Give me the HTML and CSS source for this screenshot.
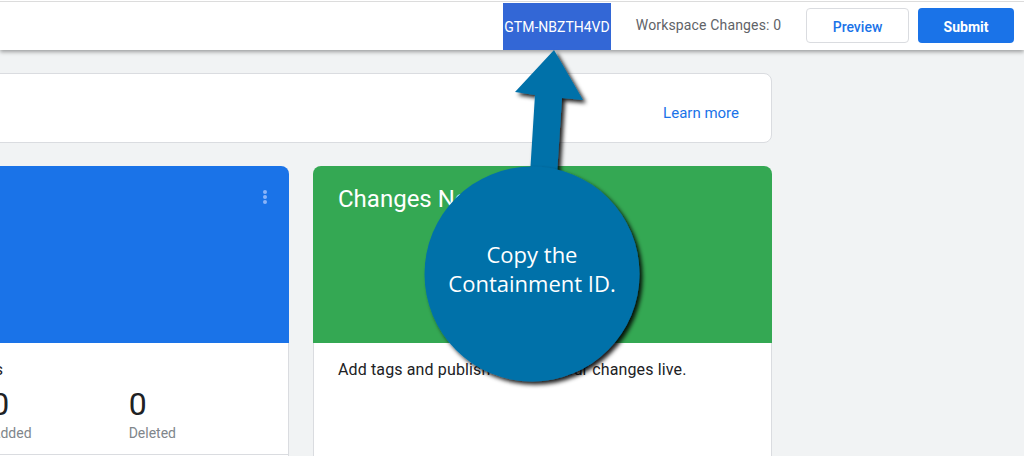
FILE: index.html
```html
<!DOCTYPE html>
<html lang="en">
<head>
<meta charset="utf-8">
<title>Workspace</title>
<link rel="stylesheet" href="styles.css">
</head>
<body>
<header class="topbar">
  <div class="container-id">GTM-NBZTH4VD</div>
  <div class="ws-changes">Workspace Changes: 0</div>
  <button class="btn btn-outline">Preview</button>
  <button class="btn btn-primary">Submit</button>
</header>
<main class="content">
  <section class="intro-card">
    <a class="learn-more">Learn more</a>
  </section>
  <div class="cards">
    <section class="card">
      <div class="card-head head-blue">
        <svg class="kebab" width="4" height="14" viewBox="0 0 4 14"><circle cx="2" cy="2" r="2"/><circle cx="2" cy="7" r="2"/><circle cx="2" cy="12" r="2"/></svg>
      </div>
      <div class="card-body">
        <div class="body-text">Workspace Changes</div>
        <div class="stats">
          <div class="stat"><div class="stat-num">0</div><div class="stat-label">Modified</div></div>
          <div class="stat"><div class="stat-num">0</div><div class="stat-label">Added</div></div>
          <div class="stat"><div class="stat-num">0</div><div class="stat-label">Deleted</div></div>
        </div>
        <div class="card-footer"></div>
      </div>
    </section>
    <section class="card">
      <div class="card-head head-green">
        <div class="head-title">Changes Not Published</div>
      </div>
      <div class="card-body">
        <div class="body-text">Add tags and publish to make your changes live.</div>
      </div>
    </section>
  </div>
</main>
<svg class="callout" width="1024" height="456" viewBox="0 0 1024 456">
  <defs>
    <filter id="sh" x="-20%" y="-20%" width="150%" height="150%">
      <feDropShadow dx="3" dy="3" stdDeviation="2" flood-color="#000" flood-opacity="0.9"/>
    </filter>
  </defs>
  <polygon filter="url(#sh)" fill="#0071a9" points="554,50 583,100 562,98 556,190 529,190 535,95 515,92"/>
  <circle filter="url(#sh)" fill="#0071a9" cx="532" cy="274" r="107.5"/>
  <text class="callout-text" x="532" y="263">Copy the</text>
  <text class="callout-text" x="532" y="292">Containment ID.</text>
</svg>
</body>
</html>
```
FILE: styles.css
```css
* { box-sizing: border-box; }
html, body { margin: 0; }
body {
  width: 1024px;
  height: 456px;
  overflow: hidden;
  position: relative;
  background: #f1f3f4;
  font-family: Roboto, "Liberation Sans", sans-serif;
  color: #202124;
}
.topbar {
  height: 50px;
  background: #fff;
  display: flex;
  align-items: flex-start;
  justify-content: flex-end;
  padding-right: 10px;
  position: relative;
  z-index: 1;
  box-shadow: inset 0 1px 0 #fff, inset 0 2px 0 #dcdcdc, 0 2px 4px rgba(0,0,0,.35);
}
.container-id {
  margin-top: 3px;
  height: 47px;
  width: 108px;
  background: #3367d6;
  color: #fff;
  font-size: 14px;
  display: flex;
  align-items: center;
  justify-content: center;
  margin-right: 24px;
  white-space: nowrap;
}
.ws-changes {
  align-self: center;
  width: 147px;
  text-align: center;
  font-size: 14px;
  letter-spacing: 0.15px;
  color: #5f6368;
  margin-right: 24px;
  white-space: nowrap;
}
.btn {
  margin-top: 8px;
  height: 35px;
  border-radius: 4px;
  font-family: Roboto, "Liberation Sans", sans-serif;
  font-size: 14px;
  font-weight: 500;
  display: flex;
  align-items: center;
  justify-content: center;
  padding: 2px 0 0;
  cursor: pointer;
}
.btn-outline {
  width: 103px;
  border: 1px solid #dadce0;
  background: #fff;
  color: #1a73e8;
  margin-right: 9px;
}
.btn-primary {
  width: 96px;
  border: none;
  background: #1a73e8;
  color: #fff;
  font-weight: 700;
}
.content {
  margin-left: -170px;
  width: 942px;
  padding-top: 23px;
}
.intro-card {
  height: 70px;
  background: #fff;
  border: 1px solid #dadce0;
  border-radius: 8px;
  display: flex;
  align-items: center;
  justify-content: flex-end;
  padding: 10px 32px 0;
}
.learn-more {
  color: #1a73e8;
  font-size: 15px;
  font-weight: 400;
}
.cards {
  display: grid;
  grid-template-columns: 459px 459px;
  gap: 24px;
  margin-top: 23px;
}
.card {
  height: 330px;
  border-radius: 8px;
  overflow: hidden;
  display: flex;
  flex-direction: column;
}
.card-head {
  height: 177px;
  display: flex;
  justify-content: space-between;
  align-items: flex-start;
  color: #fff;
}
.head-blue {
  background: #1a73e8;
  justify-content: flex-end;
  padding: 24px 22px 0 25px;
}
.head-green {
  background: #34a853;
  padding: 17px 25px 0;
}
.head-title { font-size: 24px; line-height: 32px; white-space: nowrap; }
.kebab { fill: #8ab4f8; }
.card-body {
  flex: 1;
  background: #fff;
  border: 1px solid #dadce0;
  border-top: none;
  padding: 17px 24px 0;
}
.body-text {
  font-size: 16px;
  line-height: 20px;
  letter-spacing: 0.13px;
  color: #202124;
  white-space: nowrap;
}
.stats {
  display: flex;
  margin-top: 6px;
}
.stat { width: 137px; }
.stat-num {
  font-size: 32px;
  line-height: 36px;
  color: #202124;
}
.stat-label {
  font-size: 14px;
  line-height: 20px;
  margin-top: 1px;
  color: #80868b;
}
.stat:last-child { padding-left: 1px; }
.card-footer {
  margin: 11px -24px 0;
  border-top: 1px solid #dadce0;
}
.callout {
  position: absolute;
  top: 0;
  left: 0;
  z-index: 5;
  pointer-events: none;
}
.callout-text {
  font-family: "Open Sans", "DejaVu Sans", sans-serif;
  font-size: 22px;
  fill: #fff;
  text-anchor: middle;
}
```
